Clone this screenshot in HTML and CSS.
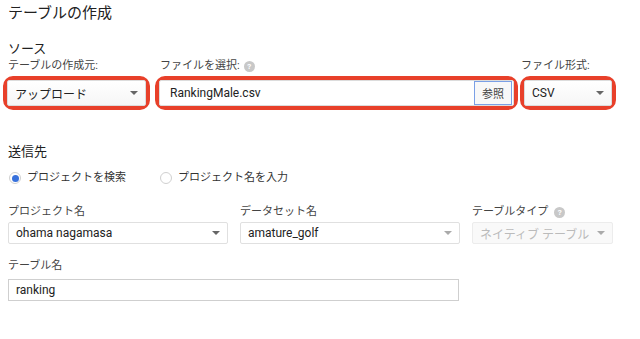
FILE: index.html
```html
<!DOCTYPE html>
<html lang="ja">
<head>
    <meta charset="UTF-8">
    <meta name="viewport" content="width=device-width, initial-scale=1.0">
    <title>テーブルの作成</title>
    <link rel="stylesheet" href="styles.css">
</head>
<body>
    <h1 class="page-title">テーブルの作成</h1>

    <section class="section">
        <h2 class="section-title source-title">ソース</h2>
        <div class="source-row">
            <div class="field field-from">
                <div class="field-label">テーブルの作成元:</div>
                <div class="highlight">
                    <div class="select">
                        <span class="select-value">アップロード</span>
                        <span class="caret"></span>
                    </div>
                </div>
            </div>
            <div class="field field-file">
                <div class="field-label">ファイルを選択: <span class="help">?</span></div>
                <div class="highlight">
                    <div class="file-input">
                        <span class="select-value">RankingMale.csv</span>
                        <button class="browse-button">参照</button>
                    </div>
                </div>
            </div>
            <div class="field field-format">
                <div class="field-label">ファイル形式:</div>
                <div class="highlight">
                    <div class="select">
                        <span class="select-value">CSV</span>
                        <span class="caret"></span>
                    </div>
                </div>
            </div>
        </div>
    </section>

    <section class="section dest">
        <h2 class="section-title">送信先</h2>
        <div class="radio-row">
            <label class="radio-option">
                <span class="radio checked"></span>
                プロジェクトを検索
            </label>
            <label class="radio-option">
                <span class="radio"></span>
                プロジェクト名を入力
            </label>
        </div>

        <div class="dest-row">
            <div class="dest-field">
                <div class="dest-label">プロジェクト名</div>
                <div class="select small">
                    <span class="select-value">ohama nagamasa</span>
                    <span class="caret"></span>
                </div>
            </div>
            <div class="dest-field">
                <div class="dest-label">データセット名</div>
                <div class="select small">
                    <span class="select-value">amature_golf</span>
                    <span class="caret light"></span>
                </div>
            </div>
            <div class="dest-field type-field">
                <div class="dest-label">テーブルタイプ <span class="help">?</span></div>
                <div class="select small disabled">
                    <span class="select-value">ネイティブ テーブル</span>
                    <span class="caret light"></span>
                </div>
            </div>
        </div>

        <div class="dest-label table-label">テーブル名</div>
        <div class="text-input">ranking</div>
    </section>
</body>
</html>
```

FILE: styles.css
```css
* {
    margin: 0;
    padding: 0;
    box-sizing: border-box;
}

body {
    font-family: Roboto, "Noto Sans CJK JP", sans-serif;
    background: #ffffff;
    color: #212121;
    width: 640px;
    height: 339px;
    overflow: hidden;
}

.page-title {
    font-size: 15px;
    font-weight: 400;
    line-height: 20px;
    padding: 3px 0 0 8px;
}

.section-title {
    font-size: 13px;
    font-weight: 400;
    line-height: 18px;
    padding-left: 8px;
}

.source-title {
    margin-top: 17px;
}

.source-row {
    display: flex;
    padding-left: 3px;
}

.field-label {
    font-size: 11px;
    line-height: 16px;
    color: #444;
    padding-left: 5px;
    display: flex;
    align-items: center;
    gap: 4px;
    margin-bottom: 2px;
}

.field-from { width: 147px; }
.field-file { width: 363px; margin-left: 5px; }
.field-format { width: 96px; margin-left: 2px; }
.field-format .field-label { padding-left: 1px; }

.highlight {
    border: 4px solid #e8402a;
    border-radius: 10px;
}

.select,
.file-input {
    height: 26px;
    border: 1px solid #dcdcdc;
    border-radius: 2px;
    background: linear-gradient(#ffffff, #f6f6f6);
    display: flex;
    align-items: center;
    justify-content: space-between;
    padding: 0 7px 0 7px;
    font-size: 12px;
    color: #222;
}

.file-input {
    background: #ffffff;
    padding: 0 1px 0 10px;
}

.browse-button {
    height: 24px;
    width: 38px;
    border: 1px solid #7ba0e6;
    background: #f8f8f8;
    font-family: inherit;
    font-size: 11px;
    color: #444;
}

.caret {
    width: 0;
    height: 0;
    border-left: 4px solid transparent;
    border-right: 4px solid transparent;
    border-top: 4px solid #666;
}

.caret.light {
    border-top-color: #aaa;
}

.help {
    display: inline-block;
    width: 11px;
    height: 11px;
    border-radius: 50%;
    background: #c8c8c8;
    color: #fff;
    font-size: 8px;
    font-weight: 700;
    line-height: 11px;
    text-align: center;
}

.dest {
    margin-top: 33px;
}

.radio-row {
    display: flex;
    gap: 34px;
    padding-left: 9px;
    margin-top: 9px;
}

.radio-option {
    display: flex;
    align-items: center;
    gap: 6px;
    font-size: 11px;
    line-height: 16px;
    color: #333;
}

.radio {
    width: 12px;
    height: 12px;
    border-radius: 50%;
    border: 1px solid #d0d0d0;
    background: #fff;
    display: flex;
    align-items: center;
    justify-content: center;
}

.radio.checked::after {
    content: "";
    width: 7px;
    height: 7px;
    border-radius: 50%;
    background: #3871dc;
}

.dest-row {
    display: flex;
    gap: 12px;
    padding-left: 8px;
    margin-top: 18px;
}

.dest-field {
    width: 220px;
}

.type-field {
    width: 141px;
}

.dest-label {
    font-size: 11px;
    line-height: 16px;
    color: #444;
    display: flex;
    align-items: center;
    gap: 6px;
    margin-bottom: 2px;
}

.select.small {
    height: 22px;
    border-color: #e0e0e0;
    background: #fff;
    padding: 0 7px 0 7px;
}

.select.disabled {
    background: #f9f9f9;
    border-color: #ececec;
    color: #bbb;
}

.table-label {
    padding-left: 8px;
    margin-top: 14px;
    margin-bottom: 5px;
}

.text-input {
    margin-left: 8px;
    width: 451px;
    height: 22px;
    border: 1px solid #cfcfcf;
    font-size: 12px;
    line-height: 20px;
    padding-left: 7px;
    color: #222;
}
```
